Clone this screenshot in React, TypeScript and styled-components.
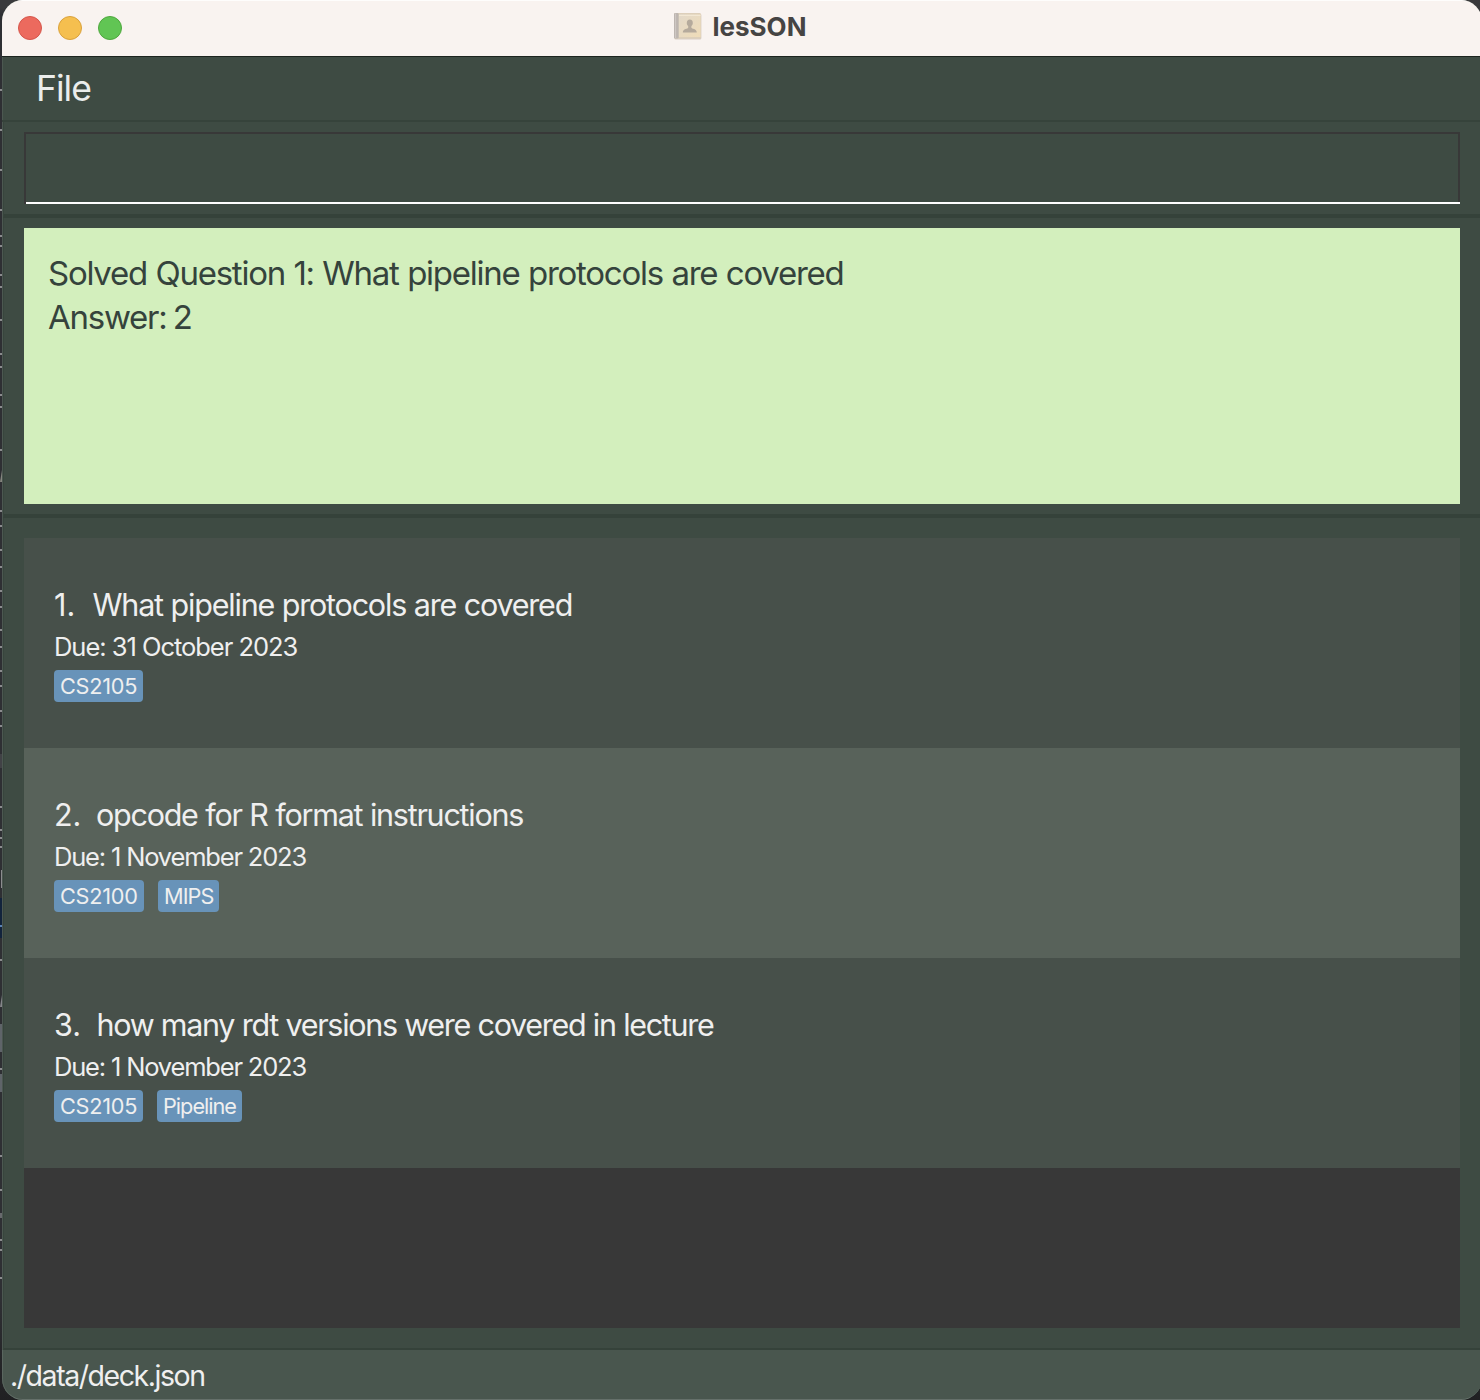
import React from "react";
import styled, { createGlobalStyle } from "styled-components";

const GlobalStyle = createGlobalStyle`
  * { box-sizing: border-box; }
  body {
    margin: 0;
    background: #2e2f33;
    font-family: Inter, "Liberation Sans", sans-serif;
    overflow: hidden;
  }
`;

const Desktop = styled.div`
  position: relative;
  width: 1480px;
  height: 1400px;
  padding-left: 2px;
  overflow: hidden;
  background: linear-gradient(#3a3a3c 0, #3a3a3c 8px, #2e2f33 14px, #2e2f33 1300px, #202022 1400px);
`;

const Backdrop = styled.svg`
  position: absolute;
  left: 0;
  top: 0;
`;

const Window = styled.div`
  width: 1480px;
  height: 1400px;
  display: flex;
  flex-direction: column;
  border-radius: 21px;
  overflow: hidden;
  background: #3e4b43;
  box-shadow: inset 1px 0 0 #4c5851;
`;

const TitleBar = styled.header`
  position: relative;
  height: 57px;
  flex: none;
  display: flex;
  align-items: center;
  justify-content: center;
  padding: 0 5px 4px 0;
  background: #f9f3f0;
  border-top: 1px solid #fefdfc;
  border-bottom: 1px solid #1c241f;
`;

const Lights = styled.div`
  position: absolute;
  left: 16px;
  top: 15px;
  display: flex;
  gap: 16px;
`;

const Light = styled.i<{ $fill: string; $edge: string }>`
  width: 24px;
  height: 24px;
  border-radius: 50%;
  background: ${(p) => p.$fill};
  border: 1px solid ${(p) => p.$edge};
`;

const Title = styled.h1`
  margin: 0 0 0 10px;
  font-size: 26px;
  line-height: 32px;
  font-weight: 700;
  color: #464443;
`;

const MenuBar = styled.nav`
  height: 65px;
  flex: none;
  padding: 10px 0 0 34px;
  border-bottom: 2px solid #36433b;
`;

const MenuItem = styled.span`
  display: block;
  font-size: 35.5px;
  line-height: 44px;
  letter-spacing: -1px;
  color: #ebedec;
`;

const Pane = styled.section<{ $bottom?: number; $top?: number }>`
  margin-left: 1px;
  padding: ${(p) => p.$top ?? 10}px 20px ${(p) => p.$bottom ?? 10}px;
  border-bottom: ${(p) => (p.$bottom ? 2 : 4)}px solid #35423a;
  border-left: 1px solid #38453d;
`;

const CommandBox = styled.div`
  display: flex;
  width: 1436px;
  height: 72px;
  border: solid #383838;
  border-width: 2px 2px 0 2px;
`;

const CommandInput = styled.div`
  flex: 1;
  margin-right: -2px;
  border-bottom: 2px solid #ffffff;
`;

const ResultBox = styled.div`
  width: 1436px;
  height: 276px;
  padding: 23px 24px;
  background: #d3efbd;
  color: #35433c;
  font-size: 33px;
  line-height: 44px;
`;

const ResultLine = styled.div<{ $wordGap: number }>`
  letter-spacing: -1.25px;
  word-spacing: ${(p) => p.$wordGap}px;
`;

const List = styled.div`
  width: 1436px;
  height: 790px;
  background: #383838;
`;

const Row = styled.article<{ $alt: boolean }>`
  height: 210px;
  padding: 47px 30px 0;
  background: ${(p) => (p.$alt ? "#58625a" : "#47504a")};
  color: #efefef;
`;

const Question = styled.div<{ $tracking: number }>`
  display: flex;
  font-size: 30.5px;
  line-height: 40px;
  letter-spacing: ${(p) => p.$tracking}px;
  word-spacing: 0.3px;
`;

const Index = styled.span<{ $width: number }>`
  width: ${(p) => p.$width}px;
  letter-spacing: 0;
`;

const Due = styled.div<{ $tracking: number }>`
  margin-top: 6px;
  font-size: 25.5px;
  line-height: 32px;
  letter-spacing: ${(p) => p.$tracking}px;
`;

const Tags = styled.div`
  display: flex;
  gap: 14px;
  margin-top: 7px;
`;

const TagPill = styled.span<{ $width: number; $tracking: number }>`
  width: ${(p) => p.$width}px;
  height: 32px;
  padding-left: 6px;
  border-radius: 4px;
  background: #6893b9;
  font-size: 21.7px;
  line-height: 33px;
  letter-spacing: ${(p) => p.$tracking}px;
  white-space: nowrap;
`;

const StatusBar = styled.footer`
  flex: 1;
  padding: 6px 0 0 7px;
  background: #49564e;
  border-bottom: 1px solid #65706a;
  border-left: 1px solid #5a665f;
  border-radius: 0 0 21px 21px;
  color: #efefef;
  font-size: 28.5px;
  line-height: 40px;
  letter-spacing: -1.45px;
`;

type Tag = { name: string; width: number; tracking: number };
type Card = {
  question: string;
  tracking: number;
  indexWidth: number;
  due: string;
  dueTracking: number;
  tags: Tag[];
};

const cs2105: Tag = { name: "CS2105", width: 89, tracking: -0.25 };

const cards: Card[] = [
  {
    question: "What pipeline protocols are covered",
    tracking: -1.2,
    indexWidth: 38.5,
    due: "31 October 2023",
    dueTracking: -1.03,
    tags: [cs2105],
  },
  {
    question: "opcode for R format instructions",
    tracking: -1.25,
    indexWidth: 42,
    due: "1 November 2023",
    dueTracking: -1.18,
    tags: [
      { name: "CS2100", width: 90, tracking: -0.25 },
      { name: "MIPS", width: 61, tracking: -0.95 },
    ],
  },
  {
    question: "how many rdt versions were covered in lecture",
    tracking: -1.31,
    indexWidth: 42.5,
    due: "1 November 2023",
    dueTracking: -1.18,
    tags: [cs2105, { name: "Pipeline", width: 85, tracking: -1 }],
  },
];

const marks = [
  90, 130, 170, 210, 236, 246, 275, 287, 320, 354, 367, 395, 407, 450, 511, 526, 550, 567, 591, 607, 630, 647,
  671, 686, 711, 726, 807, 830, 838, 847, 960, 1069, 1156, 1190, 1240, 1250, 1278,
];

function BookIcon() {
  return (
    <svg width="30" height="28" viewBox="0 0 30 28">
      <defs>
        <linearGradient id="cover" x1="0" y1="0" x2="1" y2="1">
          <stop offset="0" stopColor="#e2d8c9" />
          <stop offset="1" stopColor="#efdcb8" />
        </linearGradient>
      </defs>
      <rect x="1.4" y="0.6" width="27" height="26" rx="1.5" fill="#d9cec3" />
      <rect x="1" y="0" width="27" height="25.4" rx="1.5" fill="#ddcfba" />
      <rect x="6" y="1" width="21.5" height="23" fill="url(#cover)" />
      <path d="M6 2.5H27.5" stroke="#f2e7d3" strokeWidth="1" />
      <rect x="1" y="0" width="4.6" height="25.4" rx="1.2" fill="#bdb5b0" />
      <path d="M2.6 0.5V25" stroke="#d0c9c5" strokeWidth="1" />
      <path
        d="M16.8 6.6c-2 0-3 1.4-3 3.3 0 1.4.6 2.5 1.4 3.2v1.6c0 1-5.4 1-5.4 4.7h14c0-3.7-5.4-3.7-5.4-4.7v-1.6c.8-.7 1.4-1.8 1.4-3.2 0-1.9-1-3.3-3-3.3Z"
        fill="#b5aa9c"
      />
    </svg>
  );
}

export default function App() {
  return (
    <>
      <GlobalStyle />
      <Desktop>
        <Backdrop width="2" height="1400">
          {marks.map((y) => (
            <rect key={y} x="0" y={y - 1} width="2" height="2" fill="#8b8c8e" />
          ))}
          <path d="M0 482L2 470V482Z" fill="#85867f" />
          <rect y="754" width="2" height="14" fill="#414246" />
          <rect x="1" y="870" width="1" height="18" fill="#8b8c8e" />
          <rect y="898" width="2" height="40" fill="#12233c" />
          <rect y="925" width="2" height="2" fill="#5b83b5" />
          <path d="M0 1007L2 995V1007Z" fill="#85868a" />
          <rect y="1024" width="2" height="28" fill="#5f6469" />
          <rect y="1074" width="2" height="18" fill="#5f6469" />
          <rect y="1213" width="2" height="5" fill="#686a6d" />
        </Backdrop>
        <Window>
          <TitleBar>
            <Lights>
              <Light $fill="#ec6a5e" $edge="#d5564b" />
              <Light $fill="#f5bf4f" $edge="#d9a13c" />
              <Light $fill="#61c554" $edge="#4fa73e" />
            </Lights>
            <BookIcon />
            <Title>lesSON</Title>
          </TitleBar>
          <MenuBar>
            <MenuItem>File</MenuItem>
          </MenuBar>
          <Pane>
            <CommandBox>
              <CommandInput />
            </CommandBox>
          </Pane>
          <Pane>
            <ResultBox>
              <ResultLine $wordGap={0.45}>Solved Question 1: What pipeline protocols are covered</ResultLine>
              <ResultLine $wordGap={-1.8}>Answer: 2</ResultLine>
            </ResultBox>
          </Pane>
          <Pane $top={20} $bottom={20}>
            <List>
              {cards.map((card, i) => (
                <Row key={card.question} $alt={i % 2 === 1}>
                  <Question $tracking={card.tracking}>
                    <Index $width={card.indexWidth}>{i + 1}.</Index>
                    <span>{card.question}</span>
                  </Question>
                  <Due $tracking={card.dueTracking}>Due: {card.due}</Due>
                  <Tags>
                    {card.tags.map((tag) => (
                      <TagPill key={tag.name} $width={tag.width} $tracking={tag.tracking}>
                        {tag.name}
                      </TagPill>
                    ))}
                  </Tags>
                </Row>
              ))}
            </List>
          </Pane>
          <StatusBar>./data/deck.json</StatusBar>
        </Window>
      </Desktop>
    </>
  );
}
